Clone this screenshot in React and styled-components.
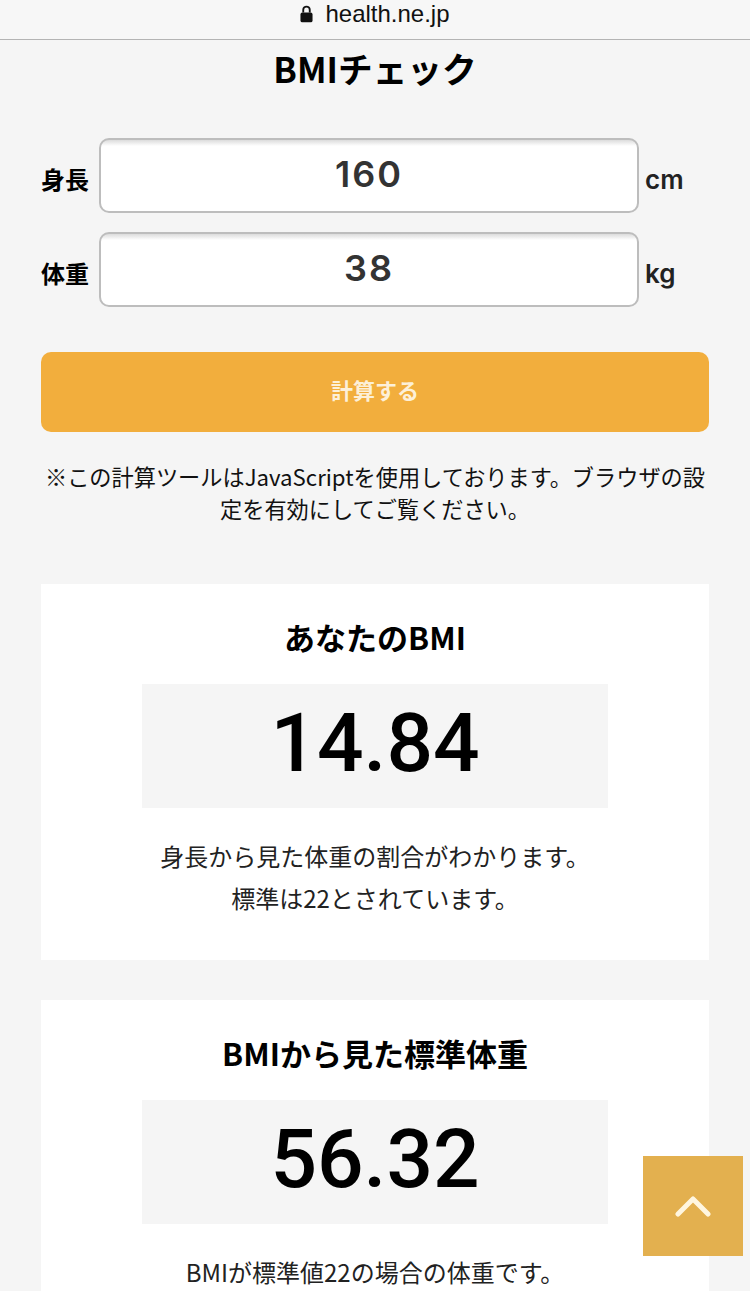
import React from 'react';
import styled, { createGlobalStyle } from 'styled-components';

const GlobalStyle = createGlobalStyle`
    html, body {
        margin: 0;
        padding: 0;
        background: #f5f5f5;
        overflow: hidden;
    }
    body {
        font-family: "Noto Sans CJK JP", "Liberation Sans", sans-serif;
        color: #000;
    }
`

const Page = styled.div`
    width: 750px;
    height: 1291px;
    overflow: hidden;
`

const AddressBar = styled.div`
    height: 39px;
    border-bottom: 1px solid #b4b4b4;
    background: #f7f7f7;
    display: flex;
    align-items: flex-start;
    justify-content: center;
    gap: 12px;
`

const Domain = styled.span`
    font-family: "Liberation Sans", sans-serif;
    font-size: 24px;
    line-height: 28px;
    color: #111;
`

const LockIcon = styled.svg`
    width: 13px;
    height: 18px;
    margin-top: 5px;
`

const Main = styled.main`
    padding: 0 41px;
`

const Title = styled.h1`
    margin: 6px 0 0;
    font-size: 34.7px;
    line-height: 44px;
    font-weight: 700;
    text-align: center;
`

const Form = styled.div`
    margin-top: 48px;
    display: flex;
    flex-direction: column;
    gap: 19px;
`

const Row = styled.div`
    display: flex;
    align-items: center;
`

const Label = styled.label`
    width: 58px;
    flex: none;
    font-size: 24px;
    font-weight: 700;
    line-height: 34px;
    padding-top: 6px;
`

const Field = styled.div`
    width: 540px;
    height: 75px;
    box-sizing: border-box;
    border: 2px solid #bdbdbd;
    border-radius: 10px;
    background: linear-gradient(#dcdcdc 0, #fff 6px);
    display: flex;
    align-items: center;
    justify-content: center;
    font-family: Inter, sans-serif;
    font-size: 36px;
    font-weight: 600;
    color: #333;
    padding-bottom: 4px;
    letter-spacing: 2px;
`

const Unit = styled.span`
    margin-left: 6px;
    font-family: Inter, sans-serif;
    font-size: 26px;
    font-weight: 600;
    line-height: 34px;
    padding-top: 8px;
    color: #222;
`

const SubmitButton = styled.button`
    display: block;
    width: 100%;
    height: 80px;
    margin-top: 45px;
    padding: 0 0 6px;
    border: 0;
    border-radius: 10px;
    background: #f2ae3d;
    color: #fdf0d8;
    font-family: inherit;
    font-size: 22px;
    font-weight: 700;
`

const Note = styled.p`
    margin: 28px 0 0;
    font-size: 22.2px;
    line-height: 32px;
    text-align: center;
    color: #111;
`

const Card = styled.section`
    margin-top: ${props => props.$gap}px;
    padding: 32px 0 41px;
    background: #fff;
    display: flex;
    flex-direction: column;
    align-items: center;
`

const CardTitle = styled.h2`
    margin: -1px 0 1px;
    font-size: 31px;
    line-height: 44px;
    font-weight: 700;
`

const ValueBox = styled.div`
    width: 466px;
    height: 124px;
    margin-top: 24px;
    padding-bottom: 7px;
    box-sizing: border-box;
    background: #f5f5f5;
    display: flex;
    align-items: center;
    justify-content: center;
    font-family: Roboto, sans-serif;
    font-size: 82px;
    font-weight: 500;
`

const CardText = styled.p`
    margin: 27px 0 0;
    font-size: 24px;
    line-height: 42px;
    text-align: center;
    color: #222;
`

const BackToTop = styled.a`
    position: fixed;
    left: 643px;
    top: 1156px;
    width: 100px;
    height: 100px;
    background: #e3b04f;
    display: flex;
    align-items: center;
    justify-content: center;
`

const App = () => {
    return (
        <Page>
            <GlobalStyle />
            <AddressBar>
                <LockIcon viewBox="0 0 14 19">
                    <path d="M3.5 8V5a3.5 3.5 0 0 1 7 0v3" fill="none" stroke="#111" strokeWidth="2" />
                    <rect x="0.5" y="8" width="13" height="10.5" rx="2" fill="#111" />
                </LockIcon>
                <Domain>health.ne.jp</Domain>
            </AddressBar>
            <Main>
                <Title>BMIチェック</Title>
                <Form>
                    <Row>
                        <Label>身長</Label>
                        <Field>160</Field>
                        <Unit>cm</Unit>
                    </Row>
                    <Row>
                        <Label>体重</Label>
                        <Field>38</Field>
                        <Unit>kg</Unit>
                    </Row>
                </Form>
                <SubmitButton>計算する</SubmitButton>
                <Note>※この計算ツールはJavaScriptを使用しております。ブラウザの設定を有効にしてご覧ください。</Note>
                <Card $gap={60}>
                    <CardTitle>あなたのBMI</CardTitle>
                    <ValueBox>14.84</ValueBox>
                    <CardText>身長から見た体重の割合がわかります。<br />標準は22とされています。</CardText>
                </Card>
                <Card $gap={40}>
                    <CardTitle>BMIから見た標準体重</CardTitle>
                    <ValueBox>56.32</ValueBox>
                    <CardText>BMIが標準値22の場合の体重です。</CardText>
                </Card>
            </Main>
            <BackToTop>
                <svg width="36" height="24" viewBox="0 0 36 24">
                    <path d="M3 20 L18 5 L33 20" fill="none" stroke="#fff6e0" strokeWidth="5" strokeLinecap="round" strokeLinejoin="round" />
                </svg>
            </BackToTop>
        </Page>
    );
};

export default App;
